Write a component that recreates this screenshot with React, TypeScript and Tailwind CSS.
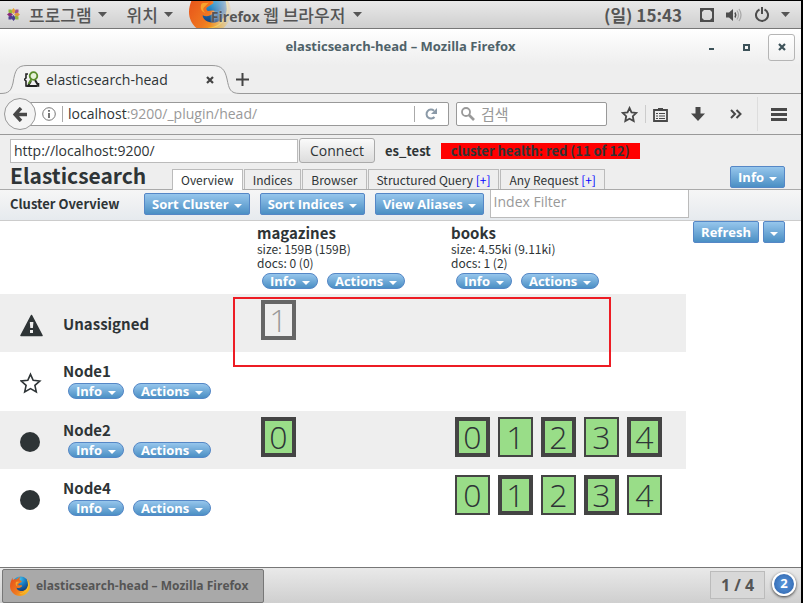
import React from "react";

const UI = "font-['Open_Sans','Noto_Sans_CJK_KR',sans-serif]";
const KR = "font-['Noto_Sans_CJK_KR','Open_Sans',sans-serif]";

function Caret({ className = "" }: { className?: string }) {
  return (
    <svg className={className} width="8" height="4" viewBox="0 0 8 4" aria-hidden="true">
      <path d="M0 0h8L4 4z" fill="currentColor" />
    </svg>
  );
}

function MenuCaret() {
  return (
    <svg width="9" height="5" viewBox="0 0 9 5" aria-hidden="true">
      <path d="M0 0h9L4.500 5z" fill="#555" />
    </svg>
  );
}

function FirefoxLogo({ className, id }: { className: string; id: string }) {
  return (
    <svg className={className} viewBox="0 0 40 40" aria-hidden="true">
      <defs>
        <radialGradient id={id + "g"} cx="0.45" cy="0.15" r="0.8">
          <stop offset="0" stopColor="#3fc1ee" />
          <stop offset="0.5" stopColor="#1672b8" />
          <stop offset="1" stopColor="#152f66" />
        </radialGradient>
        <linearGradient id={id + "f"} x1="0" y1="0.2" x2="1" y2="0.8">
          <stop offset="0" stopColor="#e8541a" />
          <stop offset="0.5" stopColor="#ef7820" />
          <stop offset="1" stopColor="#f9c623" />
        </linearGradient>
      </defs>
      <circle cx="21" cy="18" r="17" fill={`url(#${id}g)`} />
      <path
        d="M5 3C3 8 0 13 0 20c0 11 9 20 20 20s20-9 20-20c0-6-2-11-6-14 2 4 3 8 2 12-1 8-8 13-15 12-5-1-8-4-8-7 3 2 7 1 9-1 2-1 3-2 2-3-2-1-4 0-6 0-2-1-2-3 0-4l5-3c1-1 0-3-2-3-2-1-3-4 0-7-4 0-6 3-8 5-3-1-6 0-7 1C5 7 5 5 5 3z"
        fill={`url(#${id}f)`}
      />
      <path d="M34 6c5 6 5 18-2 24-4 4-9 6-14 5 9 0 17-7 18-16 0-5-1-9-2-13z" fill="#fbd43a" />
      <path d="M12 12c2-1 5 0 7-1l-4 4c-2 1-2 4 1 6-4-1-6-4-4-9z" fill="#f7a32b" />
    </svg>
  );
}

function Mini({ children }: { children: string }) {
  return (
    <button className="flex h-4 items-center gap-[6px] rounded-full border border-[#5587c6] bg-linear-to-b from-[#96c6ec] to-[#4a8fc4] px-[7px] text-[13px] leading-[14px] font-bold text-white">
      {children}
      <Caret className="mt-[3px]" />
    </button>
  );
}

function MiniPair() {
  return (
    <div className={`ml-[5px] flex gap-[9px] ${UI}`}>
      <Mini>Info</Mini>
      <Mini>Actions</Mini>
    </div>
  );
}

function BlueButton({ children, caret = true, label }: { children?: string; caret?: boolean; label?: string }) {
  return (
    <button
      aria-label={label}
      className={`flex h-[22px] items-center gap-[5px] rounded-[2px] border border-[#5587c6] bg-linear-to-b from-[#96c6ec] to-[#4a8fc4] text-[13px] leading-5 font-bold whitespace-nowrap text-white ${children ? "px-[7px]" : "px-[6px]"} ${UI}`}
    >
      {children}
      {caret && <Caret className="mt-[3px]" />}
    </button>
  );
}

type ShardData = { n: number; primary: boolean; unassigned?: boolean };

function Shard({ n, primary, unassigned }: ShardData) {
  const edge = primary ? "border-4" : "border-2";
  const tone = unassigned ? "border-[#666] bg-[#eee] text-[#999]" : "border-[#444] bg-[#99dd88] text-[#2e3436]";
  return (
    <div className={`flex h-10 w-[35px] items-center justify-center text-[32px] leading-8 font-light ${edge} ${tone} ${UI}`}>
      {n}
    </div>
  );
}

const NODES: { name: string; icon: "warn" | "star" | "dot"; magazines: ShardData[]; books: ShardData[] }[] = [
  { name: "Unassigned", icon: "warn", magazines: [{ n: 1, primary: true, unassigned: true }], books: [] },
  { name: "Node1", icon: "star", magazines: [], books: [] },
  {
    name: "Node2",
    icon: "dot",
    magazines: [{ n: 0, primary: true }],
    books: [0, 1, 2, 3, 4].map((n) => ({ n, primary: n % 2 === 0 })),
  },
  { name: "Node4", icon: "dot", magazines: [], books: [0, 1, 2, 3, 4].map((n) => ({ n, primary: n % 2 === 1 })) },
];

const INDICES = [
  { name: "magazines", size: "size: 159B (159B)", docs: "docs: 0 (0)" },
  { name: "books", size: "size: 4.55ki (9.11ki)", docs: "docs: 1 (2)" },
];

function NodeIcon({ kind }: { kind: "warn" | "star" | "dot" }) {
  return (
    <svg className="ml-5 block" width="23" height="23" viewBox="0 0 23 23" aria-hidden="true">
      {kind === "warn" && (
        <>
          <path d="M11.500 1.500 22 21.500H1z" fill="#2e3436" stroke="#2e3436" strokeWidth="1.600" strokeLinejoin="round" />
          <path d="M9.800 8h3.600l-.5 6h-2.600zM10 16h3v3h-3z" fill="#eee" />
        </>
      )}
      {kind === "star" && (
        <path
          d="m10.500 2.300 2.700 6 6.600.7-4.900 4.400 1.400 6.500-5.800-3.300-5.800 3.300 1.400-6.500L1.200 9l6.600-.7z"
          fill="none"
          stroke="#2e3436"
          strokeWidth="1.600"
        />
      )}
      {kind === "dot" && <circle cx="10" cy="11" r="10" fill="#2e3436" />}
    </svg>
  );
}

function SystemBar() {
  return (
    <header className={`flex h-7 items-center border-b border-[#777] bg-linear-to-b from-[#e9e9e9] to-[#cfcfcf] text-[#555] ${KR}`}>
      <svg className="ml-[7px]" width="13" height="13" viewBox="0 0 13 13" aria-hidden="true">
        <path d="M6.500 0 9 3 6.500 6 4 3z" fill="#e5a33a" />
        <path d="M6.500 7 9 10l-2.500 3L4 10z" fill="#4a3d8f" />
        <path d="M0 6.500 3 4l3 2.500L3 9z" fill="#8b2a7a" />
        <path d="m7 6.500 3-2.500 3 2.500L10 9z" fill="#e0973a" />
        <path d="M1.500 1.500h3l1 4-4-1z" fill="#93b83c" />
        <path d="M11.500 1.500v3l-4 1 1-4z" fill="#a14f8f" />
        <path d="M1.500 11.500v-3l4-1-1 4z" fill="#4a3d8f" />
        <path d="M11.500 11.500h-3l-1-4 4 1z" fill="#93b83c" />
      </svg>
      <button className="ml-[9px] flex items-center gap-[6px] text-[17px] leading-6 font-medium">
        프로그램
        <MenuCaret />
      </button>
      <button className="ml-5 flex items-center gap-[6px] text-[17px] leading-6 font-medium">
        위치
        <MenuCaret />
      </button>
      <button className={`relative ml-4 flex h-[27px] items-center gap-2 overflow-hidden pl-[22px] text-[14px] font-bold ${UI}`}>
        <span className="absolute -top-[10px] left-0 [mask-image:linear-gradient(to_right,black_50%,transparent_105%)]">
          <FirefoxLogo className="h-[42px] w-[42px]" id="top" />
        </span>
        <span className="relative whitespace-nowrap [text-shadow:0_0_2px_#ddd]">
          Firefox <span className={`text-[17px] font-medium ${KR}`}>웹 브라우저</span>
        </span>
        <MenuCaret />
      </button>
      <div className="ml-auto flex items-center">
        <span className="text-[17px] leading-6 font-bold">(일) 15:43</span>
        <svg className="ml-[18px]" width="14" height="14" viewBox="0 0 14 14" aria-hidden="true">
          <path d="M1 1h12v12H1z" fill="none" stroke="#4d4d4d" strokeWidth="2" />
          <path d="M2 2h2L2 4zM12 2h-2l2 2zM2 12h2l-2-2zM12 12h-2l2-2z" fill="#4d4d4d" />
        </svg>
        <svg className="ml-3" width="16" height="14" viewBox="0 0 16 14" aria-hidden="true">
          <path d="M0 4.500h3L7 1v12L3 9.500H0z" fill="#4d4d4d" />
          <path d="M9 4.500q1.500 2.500 0 5" fill="none" stroke="#4d4d4d" strokeWidth="1.500" />
          <path d="M11 2.500q3 4.500 0 9M13 1q4 6 0 12" fill="none" stroke="#aaa" strokeWidth="1.300" />
        </svg>
        <svg className="ml-[13px]" width="14" height="15" viewBox="0 0 14 15" aria-hidden="true">
          <path d="M4.500 2.500a6 6 0 1 0 5 0M7 0v7" fill="none" stroke="#4d4d4d" strokeWidth="2" />
        </svg>
        <span className="mr-[11px] ml-3">
          <MenuCaret />
        </span>
      </div>
    </header>
  );
}

function TitleBar() {
  return (
    <div className={`grid h-9 grid-cols-[1fr_auto_1fr] items-center bg-linear-to-b from-white to-[#eee] ${UI}`}>
      <span />
      <h1 className="text-[13px] font-bold text-[#4f6269]">elasticsearch-head – Mozilla Firefox</h1>
      <div className="flex items-center justify-end pr-[6px]">
        <button aria-label="Minimize" className="flex h-6 w-[34px] items-center justify-center">
          <span className="mt-1 h-[2px] w-[5px] bg-[#3d5259]" />
        </button>
        <button aria-label="Maximize" className="flex h-6 w-9 items-center justify-center">
          <span className="h-[7px] w-[7px] border-2 border-[#3d5259]" />
        </button>
        <button aria-label="Close" className="ml-1 flex h-[27px] w-[27px] items-center justify-center rounded-[3px] border border-[#b5b5b5] bg-linear-to-b from-white to-[#f0f0f0]">
          <svg width="8" height="8" viewBox="0 0 8 8" aria-hidden="true"><path d="m1 1 6 6M7 1 1 7" stroke="#3d5259" strokeWidth="2.200" /></svg>
        </button>
      </div>
    </div>
  );
}

function TabStrip() {
  return (
    <div className={`flex h-[29px] ${UI}`}>
      <div className="relative h-[29px] w-[240px] shrink-0">
        <svg className="absolute inset-0" width="240" height="29" viewBox="0 0 240 29" aria-hidden="true">
          <path d="M0 28.500C9 28.500 11 26 13 18 15 5 17 .5 27 .5H212C222 .5 225 5 227 14 229 24 230 28.500 240 28.500" fill="#f2f2f2" stroke="#999" />
        </svg>
        <div className="relative flex h-full items-center pl-6">
          <svg width="17" height="17" viewBox="0 0 17 17" aria-hidden="true">
            <path d="M4 3H2v4L.5 8.500 2 10v5h3M12 15h2.500v-3" fill="none" stroke="#222" strokeWidth="1.600" />
            <path d="M7 10 4 15h9M11 9l3 5" fill="none" stroke="#222" strokeWidth="2" />
            <circle cx="9.500" cy="5" r="3.800" fill="#e6f1d8" stroke="#5a8c2b" strokeWidth="1.800" />
            <path d="m7.500 8-3 5" stroke="#5a8c2b" strokeWidth="2" />
          </svg>
          <span className="ml-[5px] text-[14px] text-[#2e3436]">elasticsearch-head</span>
          <button aria-label="Close tab" className="mr-[26px] ml-auto">
            <svg width="8" height="8" viewBox="0 0 8 8" aria-hidden="true"><path d="m1 1 6 6M7 1 1 7" stroke="#444" strokeWidth="2.200" /></svg>
          </button>
        </div>
      </div>
      <div className="flex-1 border-b border-[#999]">
        <button aria-label="New tab" className="-ml-1 block pt-2">
          <svg width="13" height="13" viewBox="0 0 13 13" aria-hidden="true"><path d="M6.500 0v13M0 6.500h13" stroke="#444" strokeWidth="2" /></svg>
        </button>
      </div>
    </div>
  );
}

function NavBar() {
  return (
    <div className={`flex h-[41px] items-center border-b border-[#999] bg-[#eee] pl-1 ${UI}`}>
      <button aria-label="Back" className="relative z-10 flex h-8 w-8 shrink-0 items-center justify-center rounded-full border border-[#999] bg-[#f4f4f4]">
        <svg width="15" height="15" viewBox="0 0 15 15" aria-hidden="true"><path d="M8 1 2 7.500 8 14M2 7.500h12" fill="none" stroke="#484848" strokeWidth="3.400" /></svg>
      </button>
      <div className="-ml-2 flex h-6 min-w-0 flex-1 items-center rounded-[2px] border border-[#999] bg-white pl-[13px]">
        <svg className="shrink-0" width="14" height="14" viewBox="0 0 14 14" aria-hidden="true">
          <circle cx="7" cy="7" r="6.300" fill="none" stroke="#777" />
          <path d="M7 6v5M7 3v1.800" stroke="#666" strokeWidth="1.800" />
        </svg>
        <span className="ml-[6px] h-4 border-l border-[#aaa]" />
        <p className="ml-[5px] flex-1 text-[14px] leading-5 text-[#2e3436]">
          localhost<span className="text-[#999]">:9200/_plugin/head/</span>
        </p>
        <span className="h-4 border-l border-[#aaa]" />
        <button aria-label="Reload" className="mr-[11px] ml-[10px]">
          <svg width="12" height="12" viewBox="0 0 12 12" aria-hidden="true">
            <path d="M9.500 9A4.500 4.500 0 1 1 9 2.700" fill="none" stroke="#8b9aa8" strokeWidth="2" />
            <path d="M12 0v6H6z" fill="#8b9aa8" />
          </svg>
        </button>
      </div>
      <label className="ml-[7px] flex h-6 w-[151px] items-center gap-[6px] rounded-[2px] border border-[#999] bg-white pl-1">
        <svg className="shrink-0" width="14" height="14" viewBox="0 0 14 14" aria-hidden="true">
          <circle cx="5" cy="5" r="4" fill="none" stroke="#999" strokeWidth="1.800" />
          <path d="m8 8 5 5" stroke="#999" strokeWidth="2.600" />
        </svg>
        <input aria-label="검색" placeholder="검색" className={`w-full min-w-0 text-[15px] leading-5 outline-none placeholder:text-[#999] ${KR}`} />
      </label>
      <button aria-label="Bookmark" className="ml-[14px]">
        <svg width="17" height="17" viewBox="0 0 17 17" aria-hidden="true">
          <path d="m8.500 2 2 4.300 4.800.6-3.500 3.300.9 4.800-4.200-2.300L4.300 15l.9-4.800L1.700 6.900l4.800-.6z" fill="none" stroke="#484848" strokeWidth="1.800" />
        </svg>
      </button>
      <span className="ml-[7px] h-[18px] border-l border-[#ccc]" />
      <button aria-label="Library" className="ml-[7px]">
        <svg width="15" height="15" viewBox="0 0 15 15" aria-hidden="true">
          <path d="M1 3h13v11H1z" fill="none" stroke="#484848" strokeWidth="1.800" />
          <path d="M5 2V1h5v1h2v2H3V2z" fill="#484848" />
          <path d="M3 6.500h2M6 6.500h6M3 9h2M6 9h6M3 11.500h2M6 11.500h6" stroke="#484848" strokeWidth="1.200" />
        </svg>
      </button>
      <button aria-label="Downloads" className="ml-[23px]">
        <svg width="14" height="14" viewBox="0 0 14 14" aria-hidden="true"><path d="M4.500 0h5v6.500H14L7 14 0 6.500h4.500z" fill="#484848" /></svg>
      </button>
      <button aria-label="More tools" className="ml-[25px]">
        <svg width="12" height="10" viewBox="0 0 12 10" aria-hidden="true"><path d="m1 1 4 4-4 4M6.500 1l4 4-4 4" fill="none" stroke="#484848" strokeWidth="2" /></svg>
      </button>
      <span className="ml-[15px] h-[34px] border-l border-[#ddd]" />
      <button aria-label="Menu" className="mr-[14px] ml-[13px]">
        <svg width="16" height="13" viewBox="0 0 16 13" aria-hidden="true"><path d="M0 1.500h16M0 6.500h16M0 11.500h16" stroke="#484848" strokeWidth="3" /></svg>
      </button>
    </div>
  );
}

const TABS: { label: string; plus?: boolean }[] = [
  { label: "Overview" },
  { label: "Indices" },
  { label: "Browser" },
  { label: "Structured Query", plus: true },
  { label: "Any Request", plus: true },
];

function PluginHeader() {
  return (
    <div className={`border-b border-[#aaa] bg-[#eee] pt-[3px] text-[#2e3436] ${KR}`}>
      <div className="flex items-center pl-[10px]">
        <input
          aria-label="Cluster address"
          defaultValue="http://localhost:9200/"
          className={`h-6 w-72 border border-[#bbb] bg-white px-[3px] text-[14px] leading-5 outline-none ${UI}`}
        />
        <button className={`ml-px h-[25px] w-[76px] rounded-[3px] border border-[#aaa] bg-linear-to-b from-[#fafafa] to-[#ddd] text-[14px] leading-5 ${UI}`}>
          Connect
        </button>
        <b className="ml-[10px] text-[13px] leading-4 font-bold">es_test</b>
        <b className="ml-[10px] bg-[#f00] px-[10px] text-[13px] leading-4 font-bold">cluster health: red (11 of 12)</b>
      </div>
      <div className="flex h-[26px] items-end pl-[10px]">
        <h2 className="w-[162px] self-start text-[21px] leading-6 font-bold">Elasticsearch</h2>
        <nav className="flex gap-px">
          {TABS.map((t, i) => (
            <button
              key={t.label}
              className={`h-5 border border-b-0 border-[#bbb] px-2 text-[12px] leading-5 whitespace-nowrap ${i === 0 ? "-mb-px h-[21px] bg-white" : "bg-[#eee]"}`}
            >
              {t.label}
              {t.plus && <span className="text-[#00f]"> [+]</span>}
            </button>
          ))}
        </nav>
        <div className="mr-4 mb-px ml-auto">
          <BlueButton>Info</BlueButton>
        </div>
      </div>
    </div>
  );
}

function Overview() {
  return (
    <main className={`flex-1 bg-white text-[#2e3436] ${KR}`}>
      <div className="flex h-[31px] items-start border-b border-[#ccc] bg-linear-to-b from-[#f6f6f6] to-[#e6eaee] pl-[10px]">
        <h3 className="w-[134px] text-[13px] leading-[27px] font-bold">Cluster Overview</h3>
        <div className="mt-[3px] flex gap-[10px]">
          <BlueButton>Sort Cluster</BlueButton>
          <BlueButton>Sort Indices</BlueButton>
          <BlueButton>View Aliases</BlueButton>
        </div>
        <input
          aria-label="Index Filter"
          placeholder="Index Filter"
          className={`ml-[6px] h-7 w-[199px] border border-t-0 border-[#bbb] bg-white px-[3px] pb-1 text-[14px] outline-none placeholder:text-[#999] ${UI}`}
        />
      </div>
      <div className="flex items-start justify-between">
        <div className="relative w-[686px]">
          <table className="w-full table-fixed border-collapse text-left">
            <colgroup>
              <col className="w-[63px]" />
              <col className="w-[194px]" />
              <col className="w-[194px]" />
              <col />
            </colgroup>
            <thead>
              <tr className="h-[73px] align-top">
                <td />
                <td />
                {INDICES.map((x) => (
                  <th key={x.name} className="p-0 pt-[2px] font-normal">
                    <div className="text-[15px] leading-[19px] font-bold">{x.name}</div>
                    <div className="text-[12px] leading-[14px]">{x.size}</div>
                    <div className="mb-[3px] text-[12px] leading-[14px]">{x.docs}</div>
                    <MiniPair />
                  </th>
                ))}
              </tr>
            </thead>
            <tbody>
              {NODES.map((n) => (
                <tr key={n.name} className="h-[59px] odd:h-[58px] odd:bg-[#eee]">
                  <td className="p-0 pt-1">
                    <NodeIcon kind={n.icon} />
                  </td>
                  <th className={`p-0 text-[15px] leading-6 font-bold ${n.icon === "warn" ? "pt-px align-middle" : "pt-[7px] align-top"}`}>
                    {n.name}
                    {n.icon !== "warn" && <MiniPair />}
                  </th>
                  {[n.magazines, n.books].map((shards, i) => (
                    <td key={i} className="p-0 pt-[6px] pl-1 align-top">
                      <div className="flex gap-2">
                        {shards.map((s) => (
                          <Shard key={s.n} {...s} />
                        ))}
                      </div>
                    </td>
                  ))}
                </tr>
              ))}
            </tbody>
          </table>
          <div className="pointer-events-none absolute top-[76px] left-[233px] h-[70px] w-[378px] border-2 border-[#ed1c24]" />
        </div>
        <div className="mr-4 flex gap-1">
          <BlueButton caret={false}>Refresh</BlueButton>
          <BlueButton label="Refresh interval" />
        </div>
      </div>
    </main>
  );
}

function TaskBar() {
  return (
    <footer className={`flex h-9 items-start border-t border-[#777] bg-linear-to-b from-[#e9e9e9] to-[#cfcfcf] pl-[2px] ${UI}`}>
      <button className="mt-px flex h-[34px] w-[262px] items-center rounded-[2px] border border-[#777] bg-[#a9a9a9] pl-[7px] text-[12px] font-bold text-[#555]">
        <FirefoxLogo className="mr-[6px] h-5 w-5 shrink-0" id="task" />
        <span className="whitespace-nowrap">elasticsearch-head – Mozilla Firefox</span>
      </button>
      <div className="mt-[3px] mr-[7px] ml-auto flex h-7 w-[55px] items-center justify-center border border-[#bbb] bg-[#d8d8d8] text-[16px] font-bold whitespace-pre text-[#555]">
        1 / 4
      </div>
      <div className="mt-1 mr-[5px] flex h-6 w-6 items-center justify-center rounded-full border-2 border-white bg-radial from-[#5b9be0] to-[#2c5fa8] text-[13px] font-bold text-white shadow-[0_1px_3px_#333]">
        2
      </div>
    </footer>
  );
}

export default function App() {
  return (
    <div className="min-h-screen bg-black pt-px pr-[2px]">
      <div className="flex min-h-[calc(100vh-1px)] flex-col bg-[#eee]">
        <SystemBar />
        <TitleBar />
        <TabStrip />
        <NavBar />
        <PluginHeader />
        <Overview />
        <TaskBar />
      </div>
    </div>
  );
}
